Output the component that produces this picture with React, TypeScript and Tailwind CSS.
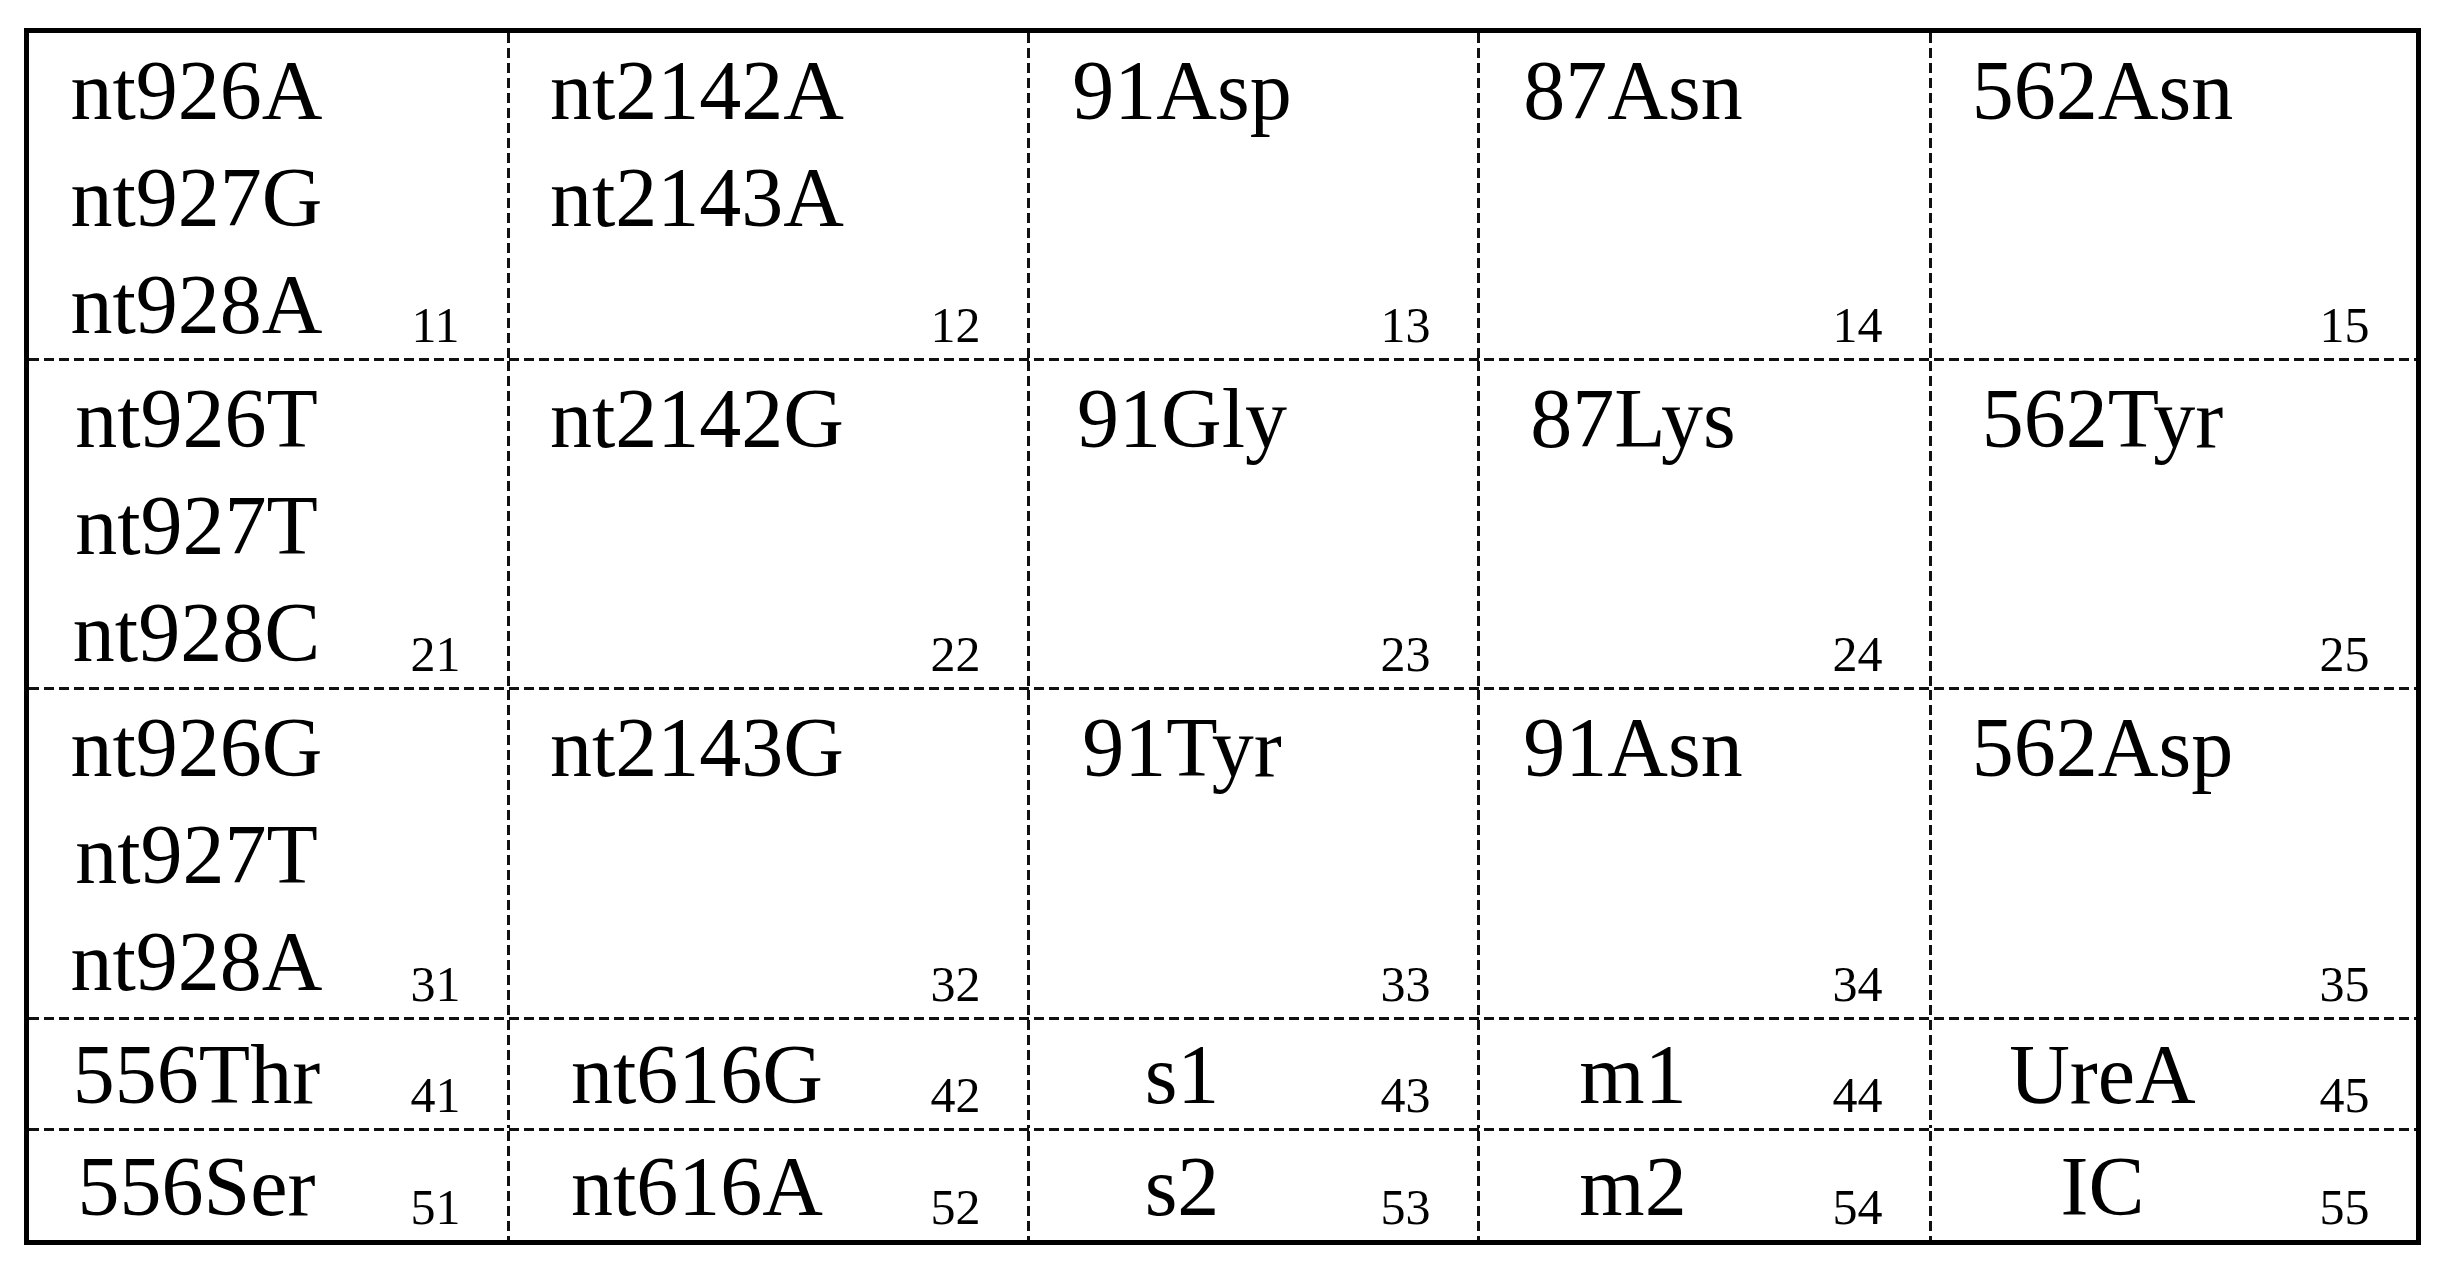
import React from "react";

type Row = {
  h: string;
  pt: string;
  cells: string[][];
  nums: string[];
};

const colW = ["w-[478px]", "w-[517px]", "w-[447px]", "w-[449px]", "w-[484px]"];

const rows: Row[] = [
  {
    h: "h-[325px]",
    pt: "pt-[4px]",
    cells: [["nt926A", "nt927G", "nt928A"], ["nt2142A", "nt2143A"], ["91Asp"], ["87Asn"], ["562Asn"]],
    nums: ["11", "12", "13", "14", "15"],
  },
  {
    h: "h-[326px]",
    pt: "pt-[4px]",
    cells: [["nt926T", "nt927T", "nt928C"], ["nt2142G"], ["91Gly"], ["87Lys"], ["562Tyr"]],
    nums: ["21", "22", "23", "24", "25"],
  },
  {
    h: "h-[327px]",
    pt: "pt-[4px]",
    cells: [["nt926G", "nt927T", "nt928A"], ["nt2143G"], ["91Tyr"], ["91Asn"], ["562Asp"]],
    nums: ["31", "32", "33", "34", "35"],
  },
  {
    h: "h-[108px]",
    pt: "pt-[1px]",
    cells: [["556Thr"], ["nt616G"], ["s1"], ["m1"], ["UreA"]],
    nums: ["41", "42", "43", "44", "45"],
  },
  {
    h: "h-[109px]",
    pt: "pt-[2px]",
    cells: [["556Ser"], ["nt616A"], ["s2"], ["m2"], ["IC"]],
    nums: ["51", "52", "53", "54", "55"],
  },
];

function VDash() {
  return (
    <div className="w-[3px] shrink-0 self-stretch bg-[repeating-linear-gradient(to_bottom,#111_0px,#111_10px,transparent_10px,transparent_15px)]" />
  );
}

function HDash() {
  return (
    <div className="h-[3px] w-full shrink-0 bg-[repeating-linear-gradient(to_right,#111_0px,#111_10px,transparent_10px,transparent_15px)]" />
  );
}

function Cell({ lines, num, w, pt }: { lines: string[]; num: string; w: string; pt: string }) {
  return (
    <div className={`${w} shrink-0 flex h-full`}>
      <div className={`flex-1 flex flex-col items-center ${pt}`}>
        {lines.map((l) => (
          <div key={l} className="text-[84px] leading-[107px] whitespace-nowrap">
            {l}
          </div>
        ))}
      </div>
      <div className="w-[143px] shrink-0 flex items-end justify-center pb-[8px]">
        <span className="text-[50px] leading-none">{num}</span>
      </div>
    </div>
  );
}

export default function App() {
  return (
    <div className="min-h-[1275px] bg-white pl-[24px] pt-[28px] text-black font-['Liberation_Serif','Times_New_Roman',serif]">
      <div className="w-[2397px] h-[1217px] border-[5px] border-black flex flex-col">
        {rows.map((r, ri) => (
          <React.Fragment key={ri}>
            {ri > 0 && <HDash />}
            <div className={`${r.h} flex shrink-0`}>
              {r.cells.map((c, ci) => (
                <React.Fragment key={ci}>
                  {ci > 0 && <VDash />}
                  <Cell lines={c} num={r.nums[ci]} w={colW[ci]} pt={r.pt} />
                </React.Fragment>
              ))}
            </div>
          </React.Fragment>
        ))}
      </div>
    </div>
  );
}
